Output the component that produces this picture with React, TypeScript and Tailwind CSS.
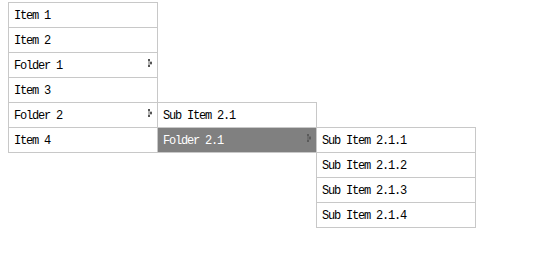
import type { ReactNode } from "react";

type Row = { label: string; folder?: boolean; active?: boolean };

const menu1: Row[] = [
  { label: "Item 1" },
  { label: "Item 2" },
  { label: "Folder 1", folder: true },
  { label: "Item 3" },
  { label: "Folder 2", folder: true },
  { label: "Item 4" },
];

const menu2: Row[] = [
  { label: "Sub Item 2.1" },
  { label: "Folder 2.1", folder: true, active: true },
];

const menu3: Row[] = [
  { label: "Sub Item 2.1.1" },
  { label: "Sub Item 2.1.2" },
  { label: "Sub Item 2.1.3" },
  { label: "Sub Item 2.1.4" },
];

const Arrow = ({ active }: { active?: boolean }) => (
  <svg width="4" height="8" viewBox="0 0 4 8" className="shrink-0 block" shapeRendering="crispEdges">
    <rect x="0" y="0" width="2" height="2" fill={active ? "#5a5a5a" : "#555"} />
    <rect x="0" y="2" width="2" height="4" fill={active ? "#6e6e6e" : "#b4b4b4"} />
    <rect x="2" y="2" width="2" height="1" fill={active ? "#6e6e6e" : "#c8c8c8"} />
    <rect x="2" y="3" width="2" height="2" fill={active ? "#5a5a5a" : "#555"} />
    <rect x="2" y="5" width="2" height="1" fill={active ? "#6e6e6e" : "#c8c8c8"} />
    <rect x="0" y="6" width="2" height="2" fill={active ? "#5a5a5a" : "#555"} />
  </svg>
);

const Menu = ({ rows, className }: { rows: Row[]; className: string }): ReactNode => (
  <div className={`shrink-0 border-x border-b border-[#c8c8c8] bg-white ${className}`}>
    {rows.map((r) => (
      <div
        key={r.label}
        className={`h-[25px] border-t border-[#c8c8c8] flex items-center justify-between pl-[5px] pr-[5px] ${
          r.active ? "bg-[#808080] text-white" : "text-black"
        }`}
      >
        <span className="leading-none pt-[2px]">{r.label}</span>
        {r.folder && (
          <span className="-mt-[4px]">
            <Arrow active={r.active} />
          </span>
        )}
      </div>
    ))}
  </div>
);

export default function App() {
  return (
    <div
      className="w-[533px] h-[273px] bg-white pt-[2px] pl-[8px] flex items-start text-[12px] tracking-[-1.2px]"
      style={{ fontFamily: '"Liberation Mono", "Noto Sans CJK SC", monospace' }}
    >
      <Menu rows={menu1} className="w-[150px]" />
      <Menu rows={menu2} className="w-[160px] -ml-px mt-[100px]" />
      <Menu rows={menu3} className="w-[160px] -ml-px mt-[125px]" />
    </div>
  );
}
